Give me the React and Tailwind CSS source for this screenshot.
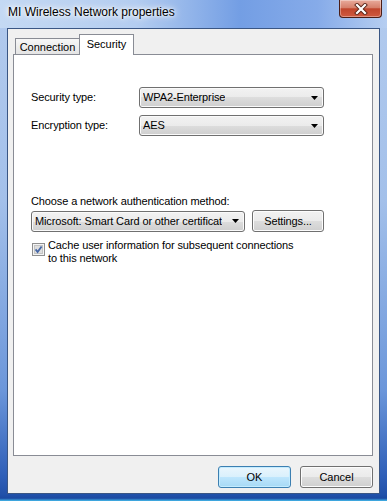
import React from 'react';

function Combo({ value, className }) {
  return (
    <div
      className={`flex items-center justify-between rounded-[3px] border border-[#707070] bg-[linear-gradient(#f2f2f2_0%,#ebebeb_50%,#dddddd_50%,#cfcfcf_100%)] pl-[3px] pr-[5px] shadow-[inset_0_0_0_1px_#fafafa] ${className}`}
    >
      <span className="overflow-hidden whitespace-nowrap">{value}</span>
      <svg width="7" height="4" viewBox="0 0 7 4" className="ml-[4px] shrink-0">
        <path d="M0 0h7L3.5 4z" fill="#000" />
      </svg>
    </div>
  );
}

function CheckBox() {
  return (
    <svg width="13" height="13" viewBox="0 0 13 13" className="shrink-0">
      <rect x="0.5" y="0.5" width="12" height="12" fill="#f4f4f4" stroke="#8f8f8f" />
      <rect x="2.5" y="2.5" width="8" height="8" fill="#dedede" stroke="#c4c4c4" />
      <path d="M3.6 6.4 L5.6 9 L9.6 3.4" stroke="#4667a6" strokeWidth="1.8" fill="none" />
    </svg>
  );
}

export default function App() {
  return (
    <div className="w-[387px] h-[501px] flex flex-col overflow-hidden bg-[linear-gradient(180deg,#b3cbee_0%,#a3c0ea_40%,#6b96da_78%,#2f5fb8_95%,#1d4ca4_100%)] font-['Liberation_Sans',Arial,sans-serif] text-black">
      {/* title bar */}
      <div className="h-[28px] flex items-start bg-[linear-gradient(90deg,#c4d9f3_0%,#b4cdf0_35%,#739ee4_62%,#86abe9_82%,#b6cef1_100%)]">
        <span className="ml-[8px] mt-[5px] text-[12px] leading-[15px] [text-shadow:0_0_10px_#fff,0_0_6px_#fff,0_0_3px_#fff]">
          MI Wireless Network properties
        </span>
        <div className="ml-auto mr-[5px] w-[43px] h-[18px] rounded-b-[4px] border border-t-0 border-[#4b1d16] bg-[linear-gradient(#e9ab9c_0%,#d6806b_45%,#c0452c_52%,#cf5a40_100%)] shadow-[inset_0_0_0_1px_rgba(255,255,255,0.35)] flex items-center justify-center">
          <svg width="14" height="12" viewBox="0 0 14 12">
            <path d="M3 2 L11 10 M11 2 L3 10" stroke="#5a2418" strokeWidth="4" strokeLinecap="square" />
            <path d="M3 2 L11 10 M11 2 L3 10" stroke="#fff" strokeWidth="2.2" strokeLinecap="square" />
          </svg>
        </div>
      </div>

      {/* client area */}
      <div className="flex-1 flex px-[7px]">
        <div className="flex-1 flex flex-col border border-[#3a5684] bg-[#f0f0f0] pt-[5px] pl-[5px]">
          <div className="relative z-10 flex items-end h-[20px] pl-[2px] text-[11px]">
            <div className="h-[16px] w-[65px] border border-b-0 border-[#898c95] bg-[linear-gradient(#f7f7f7,#e4e4e4)] flex items-center justify-center leading-[13px] pt-[1px]">
              Connection
            </div>
            <div className="h-[21px] w-[55px] -ml-px -mb-px border border-b-0 border-[#898c95] bg-white flex items-center justify-center leading-[13px] pb-[1px]">
              Security
            </div>
          </div>

          <div className="w-[360px] h-[402px] border border-[#898c95] bg-white pt-[32px] pl-[17px] text-[11px] leading-[13px] tracking-[-0.12px]">
            <div className="flex flex-col gap-[7px]">
              <div className="flex items-center h-[21px]">
                <span className="w-[108px]">Security type:</span>
                <Combo value="WPA2-Enterprise" className="w-[185px] h-[21px]" />
              </div>
              <div className="flex items-center h-[21px]">
                <span className="w-[108px]">Encryption type:</span>
                <Combo value="AES" className="w-[185px] h-[21px]" />
              </div>
            </div>

            <div className="mt-[59px]">Choose a network authentication method:</div>
            <div className="mt-[2px] flex items-center h-[22px] gap-[7px]">
              <Combo value="Microsoft: Smart Card or other certificat" className="w-[214px] h-[21px]" />
              <button className="w-[72px] h-[22px] rounded-[3px] border border-[#707070] bg-[linear-gradient(#f2f2f2_0%,#ebebeb_50%,#dddddd_50%,#cfcfcf_100%)] shadow-[inset_0_0_0_1px_#fcfcfc] text-[11px]">
                Settings...
              </button>
            </div>

            <div className="mt-[7px] flex items-start">
              <div className="ml-[1px] mt-[4px]">
                <CheckBox />
              </div>
              <div className="ml-[3px]">
                <div>Cache user information for subsequent connections</div>
                <div>to this network</div>
              </div>
            </div>
          </div>

          <div className="mt-[10px] flex justify-end gap-[9px] pr-[6px] text-[11px]">
            <button className="w-[73px] h-[22px] rounded-[3px] border border-[#3c7fb1] bg-[linear-gradient(#eaf6fd_0%,#d9f0fc_50%,#bee6fd_50%,#a7d9f5_100%)] shadow-[inset_0_0_0_1px_#c4ecff]">
              OK
            </button>
            <button className="w-[73px] h-[22px] rounded-[3px] border border-[#707070] bg-[linear-gradient(#f2f2f2_0%,#ebebeb_50%,#dddddd_50%,#cfcfcf_100%)] shadow-[inset_0_0_0_1px_#fcfcfc]">
              Cancel
            </button>
          </div>
        </div>
      </div>

      {/* bottom frame */}
      <div className="h-[7px] bg-[linear-gradient(#2152ab_0%,#1c4aa2_60%,#45b9ea_100%)]" />
    </div>
  );
}
